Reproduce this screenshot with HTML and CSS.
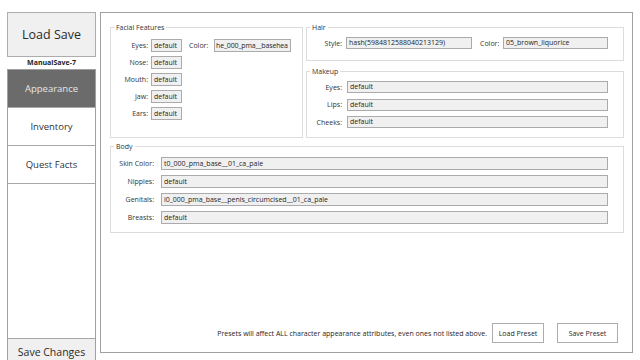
FILE: index.html
```html
<!DOCTYPE html>
<html lang="en">
<head>
    <meta charset="UTF-8">
    <title>Save Editor</title>
    <link rel="stylesheet" href="styles.css">
</head>
<body>
<div class="app">
    <div class="side">
        <button class="load">Load Save</button>
        <div class="save-name">ManualSave-7</div>
        <div class="tabs">
            <div class="tab active">Appearance</div>
            <div class="tab">Inventory</div>
            <div class="tab">Quest Facts</div>
            <div class="fill"></div>
            <button class="save-changes">Save Changes</button>
        </div>
    </div>

    <div class="main">
        <div class="top">
            <div class="group facial">
                <span class="title">Facial Features</span>
                <div class="row">
                    <span class="lbl">Eyes:</span><span class="box small">default</span>
                    <span class="lbl2">Color:</span><span class="box color">he_000_pma__basehea</span>
                </div>
                <div class="row"><span class="lbl">Nose:</span><span class="box small">default</span></div>
                <div class="row"><span class="lbl">Mouth:</span><span class="box small">default</span></div>
                <div class="row"><span class="lbl">Jaw:</span><span class="box small">default</span></div>
                <div class="row"><span class="lbl">Ears:</span><span class="box small">default</span></div>
            </div>
            <div class="right-col">
                <div class="group hair">
                    <span class="title">Hair</span>
                    <div class="row">
                        <span class="lbl">Style:</span><span class="box style">hash(5984812588040213129)</span>
                        <span class="lbl2">Color:</span><span class="box hcolor">05_brown_liquorice</span>
                    </div>
                </div>
                <div class="group makeup">
                    <span class="title">Makeup</span>
                    <div class="row"><span class="lbl">Eyes:</span><span class="box wide">default</span></div>
                    <div class="row"><span class="lbl">Lips:</span><span class="box wide">default</span></div>
                    <div class="row"><span class="lbl">Cheeks:</span><span class="box wide">default</span></div>
                </div>
            </div>
        </div>

        <div class="group body-group">
            <span class="title">Body</span>
            <div class="row"><span class="lbl">Skin Color:</span><span class="box wide">t0_000_pma_base__01_ca_pale</span></div>
            <div class="row"><span class="lbl">Nipples:</span><span class="box wide">default</span></div>
            <div class="row"><span class="lbl">Genitals:</span><span class="box wide">i0_000_pma_base__penis_circumcised__01_ca_pale</span></div>
            <div class="row"><span class="lbl">Breasts:</span><span class="box wide">default</span></div>
        </div>

        <div class="presets">
            <span class="note">Presets will affect ALL character appearance attributes, even ones not listed above.</span>
            <button class="btn load-preset">Load Preset</button>
            <button class="btn save-preset">Save Preset</button>
        </div>
    </div>
</div>
</body>
</html>
```

FILE: styles.css
```css
*{
    box-sizing: border-box;
}
html, body{
    margin: 0;
    padding: 0;
    height: 100%;
    overflow: hidden;
    background: #fff;
}
body{
    font-family: "Open Sans", "Noto Sans", sans-serif;
    color: #1e1e1e;
}
button{
    font-family: inherit;
    color: #1e1e1e;
    padding: 0;
    cursor: pointer;
}
.app{
    display: flex;
    padding: 12px 0 0 7px;
}

/* left column */
.side{
    width: 89px;
    display: flex;
    flex-direction: column;
}
.load{
    height: 45px;
    background: #f0f0f0;
    border: 1px solid #adadad;
    font-size: 12.5px;
    color: #2a2a2a;
}
.save-name{
    height: 12px;
    line-height: 12px;
    font-size: 7px;
    font-weight: bold;
    text-align: center;
}
.tabs{
    height: 298px;
    border: 1px solid #a0a0a0;
    display: flex;
    flex-direction: column;
}
.tab{
    height: 38px;
    border-bottom: 1px solid #a8a8a8;
    display: flex;
    align-items: center;
    justify-content: center;
    font-size: 9.5px;
    color: #333;
}
.tab.active{
    background: #6b6b6b;
    color: #e6e6e6;
}
.fill{
    flex: 1;
}
.save-changes{
    height: 28px;
    border: none;
    border-top: 1px solid #a8a8a8;
    background: #f0f0f0;
    font-size: 10.5px;
    padding-bottom: 2px;
    color: #2a2a2a;
}

/* main panel */
.main{
    margin-left: 4px;
    width: 533px;
    height: 341px;
    border: 1px solid #a0a0a0;
    padding: 14px 8px 9px 9px;
    display: flex;
    flex-direction: column;
}
.top{
    display: grid;
    grid-template-columns: 193px 1fr;
    gap: 3px;
}
.right-col{
    display: flex;
    flex-direction: column;
    gap: 10px;
}
.group{
    position: relative;
    border: 1px solid #dcdcdc;
    display: flex;
    flex-direction: column;
}
.group .title{
    position: absolute;
    top: -6px;
    left: 3px;
    padding: 0 2px;
    background: #fff;
    font-size: 7px;
    line-height: 11px;
    color: #333;
}
.row{
    display: flex;
    align-items: center;
    font-size: 7px;
}
.lbl{
    text-align: right;
    color: #333;
}
.lbl2{
    color: #333;
}
.box{
    background: #f0f0f0;
    border: 1px solid #ababab;
    padding-left: 2px;
    white-space: nowrap;
    overflow: hidden;
    color: #1e1e1e;
}

.facial{
    padding-top: 11px;
    gap: 4px;
}
.facial .row{
    height: 13px;
}
.facial .lbl{
    width: 37px;
    margin-right: 3px;
}
.facial .box{
    height: 13px;
    line-height: 11px;
}
.facial .small{
    width: 31px;
}
.facial .lbl2{
    margin-left: 7px;
    width: 25px;
}
.facial .color{
    width: 77px;
    padding-left: 1px;
    letter-spacing: -0.15px;
}

.hair{
    padding: 9px 0 11px 0;
}
.hair .row, .makeup .row{
    height: 12px;
}
.hair .box, .makeup .box{
    height: 12px;
    line-height: 10px;
}
.hair .lbl, .makeup .lbl{
    width: 35px;
    margin-right: 4px;
}
.hair .style{
    width: 126px;
}
.hair .lbl2{
    margin-left: 8px;
    width: 23px;
}
.hair .hcolor{
    width: 105px;
}

.makeup{
    padding: 9px 15px 9px 0;
    gap: 5.5px;
}
.makeup .lbl{
    margin-right: 5px;
}
.wide{
    flex: 1;
}

.body-group{
    margin-top: 8px;
    padding: 10px 15px 8px 0;
    gap: 5px;
}
.body-group .row{
    height: 13px;
}
.body-group .lbl{
    width: 43px;
    margin-right: 7px;
}
.body-group .box{
    height: 13px;
    line-height: 11px;
}

.presets{
    margin-top: auto;
    display: flex;
    align-items: center;
    justify-content: flex-end;
    margin-right: 6px;
}
.note{
    font-size: 7px;
    color: #1e1e1e;
    margin-right: 5px;
}
.btn{
    height: 20px;
    background: #fff;
    border: 1px solid #adadad;
    font-size: 7px;
}
.load-preset{
    width: 52px;
}
.save-preset{
    width: 61px;
    margin-left: 13px;
}
```
